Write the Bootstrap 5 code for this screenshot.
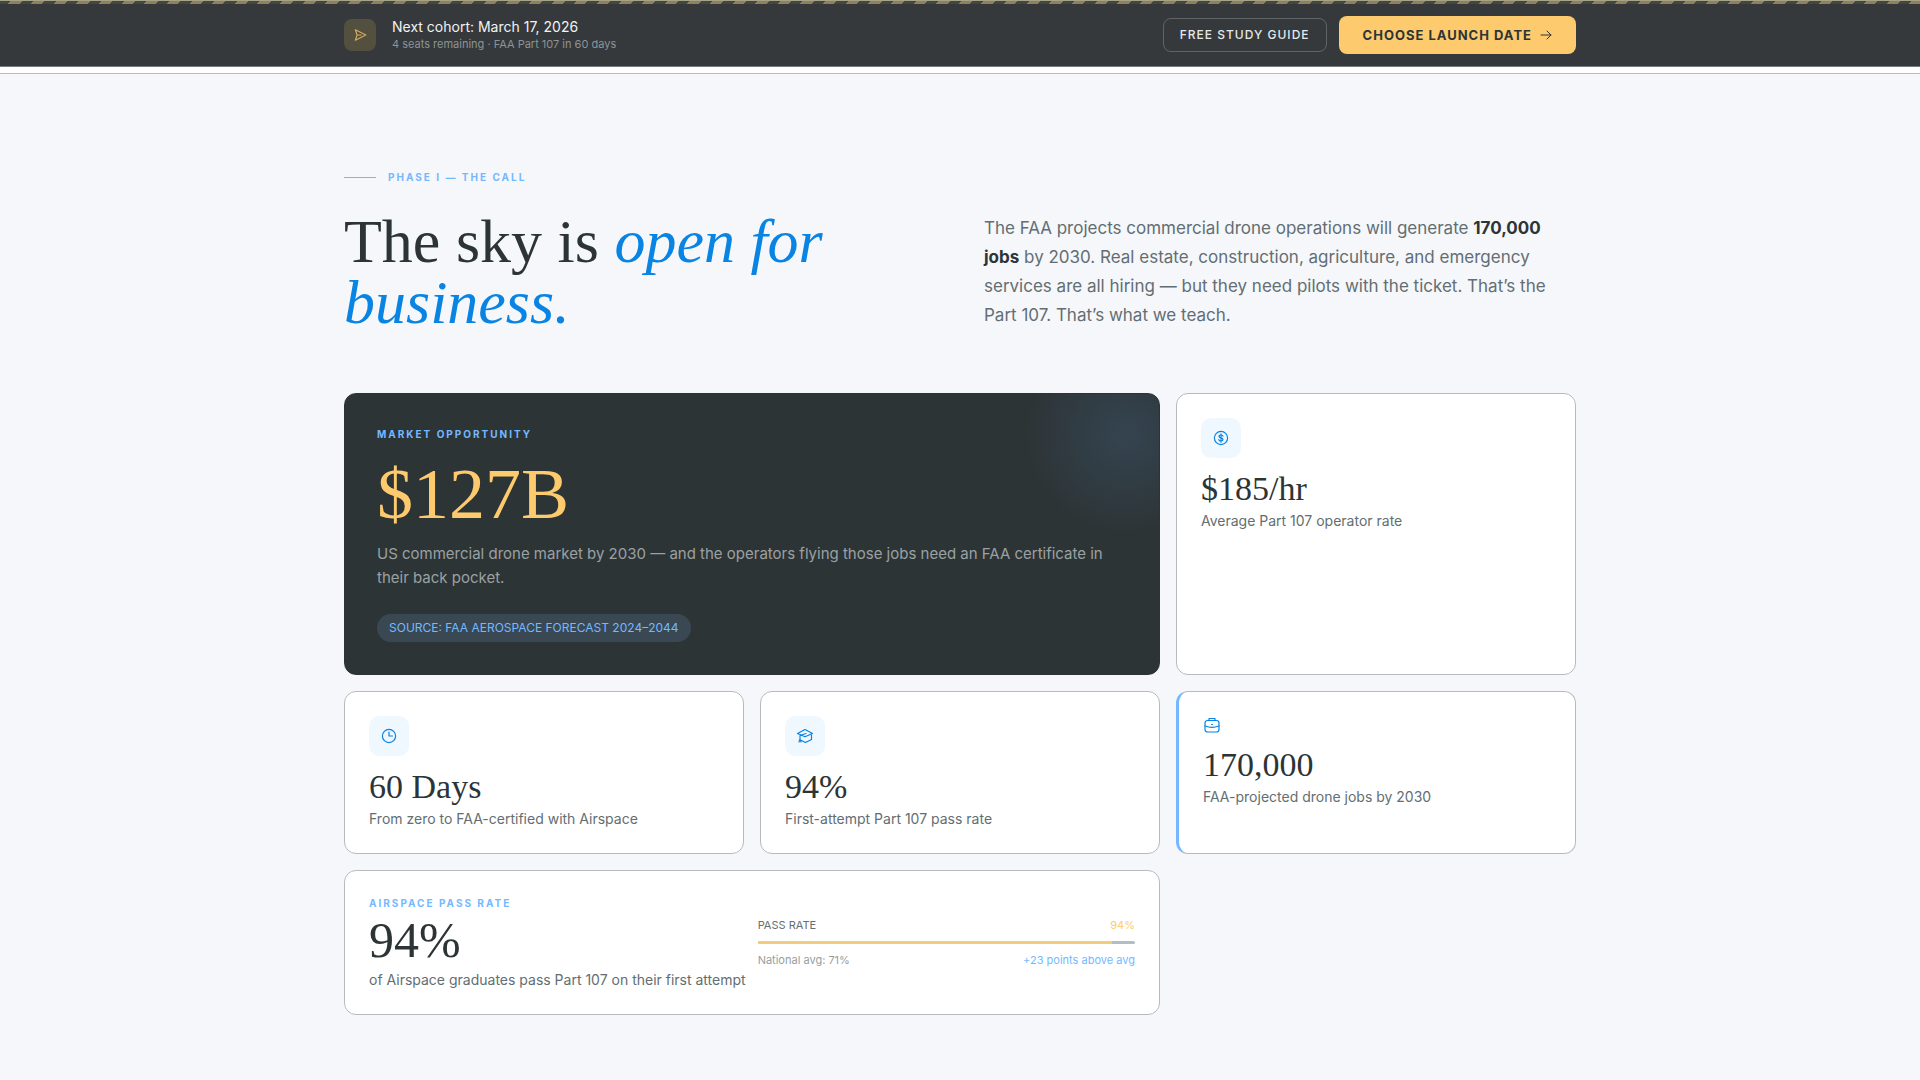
<!DOCTYPE html>
<html lang="en">
<head>
<meta charset="utf-8">
<meta name="viewport" content="width=device-width, initial-scale=1">
<title>Airspace – Part 107 training</title>
<link href="https://cdn.jsdelivr.net/npm/bootstrap@5.3.0/dist/css/bootstrap.min.css" rel="stylesheet">
<style>
:root{--ink:#2d3436;--slate:#636e72;--line:#b2bec3;--sky:#74b9ff;--blue:#0984e3;--gold:#fdcb6e}
body{font-family:Inter,"Liberation Sans",sans-serif;color:var(--ink);background:#fff}
.wrap{max-width:1280px;padding-left:24px;padding-right:24px}
.serif{font-family:"Liberation Serif",serif;font-weight:400}
.topbar{background:#35393b;border-bottom:1px solid #777c7e}
.hazard{height:4px;border-top:1px solid #a5a38a;background:repeating-linear-gradient(-45deg,#8f8258 0 8px,#45473f 8px 16px)}
.send-box{width:32px;height:32px;border-radius:8px;background:#53503f;color:#d3a962}
.cohort{font-size:14px;line-height:18px;color:#f0f2f3}
.seats{font-size:11px;line-height:17px;color:#8d9496}
.btn-guide{height:34px;padding:0 16px;border:1px solid #5f6466;border-radius:8px;color:#e6e9ea;font-size:12px;font-weight:500;letter-spacing:1px;line-height:32px}
.btn-launch{height:38px;padding:0 24px;border:0;border-radius:8px;background:var(--gold);color:var(--ink);font-size:13px;font-weight:700;letter-spacing:1px;line-height:38px}
.btn-guide:hover{border-color:#fff;color:#fff}
.btn-launch:hover{background:#ffd98f}
.subnav{height:7px;background:#fff;border-bottom:1px solid var(--line)}
.call{background:#f5f7fb;padding:93px 0 65px}
.phase{height:20px}
.eyebrow{font-size:10px;line-height:16px;font-weight:700;letter-spacing:2px;color:var(--sky)}
.rule{width:32px;height:1px;background:var(--sky)}
.headline{font-size:62px;line-height:61px}
.headline em{color:var(--blue)}
.intro{font-size:17px;line-height:29px;color:var(--slate)}
.intro strong{color:var(--ink)}
.two-col{display:grid;grid-template-columns:1fr 1fr;gap:48px;margin-bottom:60px}
.bento{display:grid;grid-template-columns:repeat(3,1fr);gap:16px}
.wide{grid-column:span 2}
.tile{background:#fff;border:1px solid #b5bbbf;border-radius:12px;padding:24px}
.tile-dark{background:radial-gradient(circle at 780px 40px,#344450 0,#2d3436 100px);border-color:var(--ink);padding:32px}
.tile-edge{border-left:3px solid var(--sky)}
.tile-split{gap:12px}
.market{font-size:72px;line-height:72px;margin:16px 0 12px;color:var(--gold)}
.market-text{font-size:15px;line-height:24px;color:#9aa1a3}
.source{font-size:12px;line-height:28px;padding:0 12px;border-radius:14px;background:#394853;color:var(--sky)}
.icon-box{width:40px;height:40px;border-radius:10px;background:#f0f8ff}
.icon-gap{margin-bottom:12px}
.blue{color:var(--blue)}
.stat{font-size:34px;line-height:37px}
.stat-big{font-size:50px;line-height:51px}
.note{font-size:14px;line-height:20px;color:var(--slate)}
.meter{height:3px;border-radius:2px;background:var(--line)}
.meter .progress-bar{background:#f3cb7c}
.fine{font-size:11px;line-height:16px}
.gold{color:var(--gold)}.pale{color:#979ea1}.sky{color:var(--sky)}.slate{color:var(--slate)}
svg{display:block;fill:none;stroke:currentColor;stroke-linecap:round;stroke-linejoin:round}
</style>
</head>
<body>
<header class="topbar">
  <div class="hazard"></div>
  <div class="container-fluid wrap d-flex justify-content-between align-items-center py-2 my-1">
    <div class="d-flex align-items-center gap-3">
      <div class="send-box d-flex align-items-center justify-content-center">
        <svg width="14" height="14" viewBox="0 0 24 24" stroke-width="2"><path d="M4 3l18 9-18 9 3-9z M7 12h7"/></svg>
      </div>
      <div>
        <div class="cohort">Next cohort: March 17, 2026</div>
        <div class="seats">4 seats remaining · FAA Part 107 in 60 days</div>
      </div>
    </div>
    <div class="d-flex align-items-center gap-2">
      <button type="button" class="btn btn-guide me-1">FREE STUDY GUIDE</button>
      <button type="button" class="btn btn-launch d-flex align-items-center gap-2">CHOOSE LAUNCH DATE
        <svg width="12" height="14" viewBox="0 0 12 14" stroke-width="1"><path d="M1 7h10M7 3l4 4-4 4"/></svg>
      </button>
    </div>
  </div>
</header>
<div class="subnav"></div>
<main class="call">
  <div class="container-fluid wrap">
    <div class="phase d-flex align-items-center gap-2 mb-4"><span class="rule me-1"></span><span class="eyebrow">PHASE I — THE CALL</span></div>
    <div class="two-col align-items-center">
      <h1 class="serif headline mb-0">The sky is <em>open for business.</em></h1>
      <p class="intro mb-0">The FAA projects commercial drone operations will generate <strong>170,000 jobs</strong> by 2030. Real estate, construction, agriculture, and emergency services are all hiring — but they need pilots with the ticket. That’s the Part 107. That’s what we teach.</p>
    </div>
    <div class="bento">
      <section class="tile tile-dark wide d-flex flex-column align-items-start">
        <div class="eyebrow">MARKET OPPORTUNITY</div>
        <div class="serif market">$127B</div>
        <p class="market-text mb-4">US commercial drone market by 2030 — and the operators flying those jobs need an FAA certificate in their back pocket.</p>
        <span class="source">SOURCE: FAA AEROSPACE FORECAST 2024–2044</span>
      </section>
      <section class="tile">
        <div class="icon-box icon-gap blue d-flex align-items-center justify-content-center">
          <svg width="16" height="16" viewBox="0 0 16 16" stroke-width="1.2"><circle cx="8" cy="8" r="6.6"/><path d="M10 6.2C9.8 5.4 9 5 8 5S6 5.500 6 6.400C6 8.500 10 7.300 10 9.500c0 1-.9 1.500-2 1.500s-2-.5-2.200-1.400M8 3.800v8.400"/></svg>
        </div>
        <div class="serif stat mb-1">$185/hr</div>
        <div class="note">Average Part 107 operator rate</div>
      </section>
      <section class="tile">
        <div class="icon-box icon-gap blue d-flex align-items-center justify-content-center">
          <svg width="16" height="16" viewBox="0 0 16 16" stroke-width="1.2"><circle cx="8" cy="8" r="6.600"/><path d="M8 4v4h3.500"/></svg>
        </div>
        <div class="serif stat mb-1">60 Days</div>
        <div class="note">From zero to FAA-certified with Airspace</div>
      </section>
      <section class="tile">
        <div class="icon-box icon-gap blue d-flex align-items-center justify-content-center">
          <svg width="18" height="16" viewBox="0 0 18 16" stroke-width="1.2"><path d="M1.500 5.500L9 1.500l7.500 4L9 8.800zM10 5.500L4 7.500v5M15.500 7v4.500l-6 3-4-2M3 14l1-3 1 3"/></svg>
        </div>
        <div class="serif stat mb-1">94%</div>
        <div class="note">First-attempt Part 107 pass rate</div>
      </section>
      <section class="tile tile-edge">
        <svg class="blue icon-gap" width="18" height="18" viewBox="0 0 18 18" stroke-width="1.2"><rect x="2" y="4.500" width="14" height="11.500" rx="2.500"/><path d="M6 4.500V2.500h6v2M2 10c4 1.600 10 1.600 14 0M8.500 8.500h1"/></svg>
        <div class="serif stat mb-1">170,000</div>
        <div class="note">FAA-projected drone jobs by 2030</div>
      </section>
      <section class="tile tile-split wide d-flex align-items-center">
        <div>
          <div class="eyebrow">AIRSPACE PASS RATE</div>
          <div class="serif stat-big my-1">94%</div>
          <div class="note text-nowrap">of Airspace graduates pass Part 107 on their first attempt</div>
        </div>
        <div class="flex-grow-1">
          <div class="fine d-flex justify-content-between mb-2"><span class="slate">PASS RATE</span><span class="gold">94%</span></div>
          <div class="progress meter mb-2" role="progressbar" aria-label="Pass rate" aria-valuenow="94" aria-valuemin="0" aria-valuemax="100"><div class="progress-bar" style="width:94%"></div></div>
          <div class="fine d-flex justify-content-between"><span class="pale">National avg: 71%</span><span class="sky">+23 points above avg</span></div>
        </div>
      </section>
    </div>
  </div>
</main>
<script src="https://cdn.jsdelivr.net/npm/bootstrap@5.3.0/dist/js/bootstrap.bundle.min.js"></script>
</body>
</html>
